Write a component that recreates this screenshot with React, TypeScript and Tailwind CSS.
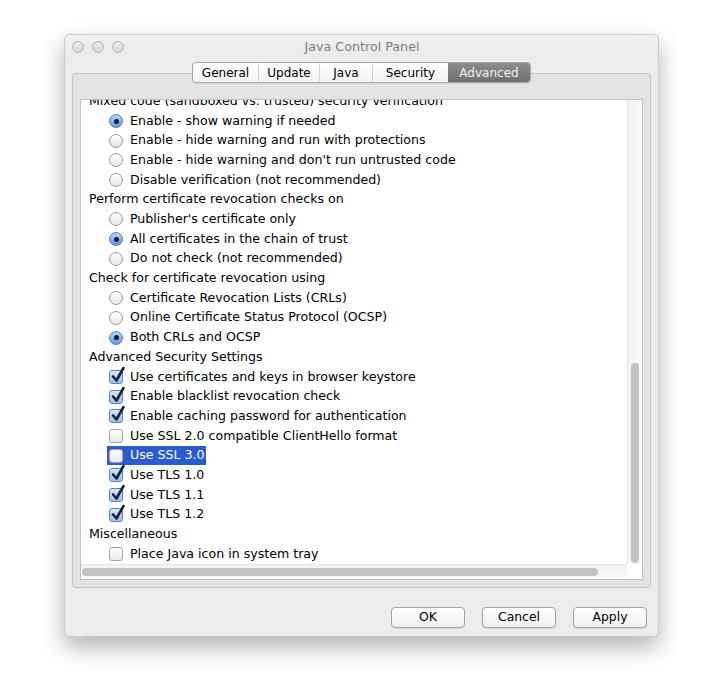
import React from 'react';

type Row =
    | { kind: 'header'; label: string }
    | { kind: 'radio'; label: string; on: boolean }
    | { kind: 'check'; label: string; on: boolean; selected?: boolean };

const ROWS: Row[] = [
    { kind: 'header', label: 'Mixed code (sandboxed vs. trusted) security verification' },
    { kind: 'radio', label: 'Enable - show warning if needed', on: true },
    { kind: 'radio', label: 'Enable - hide warning and run with protections', on: false },
    { kind: 'radio', label: "Enable - hide warning and don't run untrusted code", on: false },
    { kind: 'radio', label: 'Disable verification (not recommended)', on: false },
    { kind: 'header', label: 'Perform certificate revocation checks on' },
    { kind: 'radio', label: "Publisher's certificate only", on: false },
    { kind: 'radio', label: 'All certificates in the chain of trust', on: true },
    { kind: 'radio', label: 'Do not check (not recommended)', on: false },
    { kind: 'header', label: 'Check for certificate revocation using' },
    { kind: 'radio', label: 'Certificate Revocation Lists (CRLs)', on: false },
    { kind: 'radio', label: 'Online Certificate Status Protocol (OCSP)', on: false },
    { kind: 'radio', label: 'Both CRLs and OCSP', on: true },
    { kind: 'header', label: 'Advanced Security Settings' },
    { kind: 'check', label: 'Use certificates and keys in browser keystore', on: true },
    { kind: 'check', label: 'Enable blacklist revocation check', on: true },
    { kind: 'check', label: 'Enable caching password for authentication', on: true },
    { kind: 'check', label: 'Use SSL 2.0 compatible ClientHello format', on: false },
    { kind: 'check', label: 'Use SSL 3.0', on: false, selected: true },
    { kind: 'check', label: 'Use TLS 1.0', on: true },
    { kind: 'check', label: 'Use TLS 1.1', on: true },
    { kind: 'check', label: 'Use TLS 1.2', on: true },
    { kind: 'header', label: 'Miscellaneous' },
    { kind: 'check', label: 'Place Java icon in system tray', on: false },
];

const TABS = [
    { label: 'General', w: 'w-[65px]' },
    { label: 'Update', w: 'w-[61px]' },
    { label: 'Java', w: 'w-[53px]' },
    { label: 'Security', w: 'w-[76px]' },
    { label: 'Advanced', w: 'w-[82px]' },
];

function Radio({ on }: { on: boolean }) {
    if (on) {
        return (
            <span className="w-[14px] h-[14px] rounded-full border border-[#5a7fb5] bg-gradient-to-b from-[#b9d5f5] to-[#5c9ae3] flex items-center justify-center shrink-0">
                <span className="w-[5px] h-[5px] rounded-full bg-[#0f1c33]" />
            </span>
        );
    }
    return <span className="w-[14px] h-[14px] rounded-full border border-[#9d9d9d] bg-gradient-to-b from-[#ffffff] to-[#e6e6e6] shrink-0" />;
}

function Check({ on }: { on: boolean }) {
    if (on) {
        return (
            <span className="relative w-[14px] h-[14px] rounded-[3px] border border-[#6581ae] bg-gradient-to-b from-[#d6e6f8] to-[#9fc1ec] shrink-0">
                <svg className="absolute left-[1px] top-[-4px] overflow-visible" width="14" height="16" viewBox="0 0 14 16">
                    <path d="M2 9.5 L5.5 13.5 L12.5 1" fill="none" stroke="#14233f" strokeWidth="2.6" strokeLinecap="round" strokeLinejoin="round" />
                </svg>
            </span>
        );
    }
    return <span className="w-[14px] h-[14px] rounded-[3px] border border-[#a3a3a3] bg-gradient-to-b from-[#ffffff] to-[#e8e8e8] shrink-0" />;
}

function OptionRow({ row }: { row: Row }) {
    if (row.kind === 'header') {
        return <div className="h-[19.7px] flex items-center pl-[8px] whitespace-nowrap">{row.label}</div>;
    }
    const selected = row.kind === 'check' && row.selected;
    return (
        <div className="h-[19.7px] flex items-center pl-[26px] whitespace-nowrap">
            <div className={`inline-flex items-center h-[19px] pl-[2px] pr-[1px] gap-[7px] ${selected ? 'bg-[#2a5ccf] text-white' : ''}`}>
                {row.kind === 'radio' ? <Radio on={row.on} /> : <Check on={row.on} />}
                <span>{row.label}</span>
            </div>
        </div>
    );
}

function Button({ label }: { label: string }) {
    return (
        <button className="w-[74px] h-[21px] rounded-[4px] border border-[#a2a2a2] bg-gradient-to-b from-[#ffffff] to-[#f0f0f0] shadow-[0_1px_0_rgba(0,0,0,0.08)] text-[12.4px] text-black leading-none">
            {label}
        </button>
    );
}

export default function App() {
    return (
        <div className="w-[721px] h-[695px] bg-white pt-[34px] pl-[64px] text-[12.6px] text-black" style={{ fontFamily: '"Lucida Grande", "DejaVu Sans", sans-serif' }}>
            <div className="w-[595px] h-[603px] rounded-[5px] bg-[#ececec] border border-[#c9c9c9] shadow-[0_10px_22px_rgba(0,0,0,0.3)] flex flex-col">
                {/* title bar */}
                <div className="relative h-[23px] flex items-center rounded-t-[5px] bg-gradient-to-b from-[#f1f1f1] to-[#eaeaea]">
                    <div className="flex gap-[8px] pl-[7px]">
                        {[0, 1, 2].map((i) => (
                            <span key={i} className="w-[12px] h-[12px] rounded-full border border-[#b6b6b6] bg-gradient-to-b from-[#e9e9e9] to-[#d9d9d9]" />
                        ))}
                    </div>
                    <div className="absolute inset-0 flex items-center justify-center text-[12.7px] text-[#7d7d7d] pl-[1px]">Java Control Panel</div>
                </div>

                {/* tabs */}
                <div className="relative z-10 mt-[4px] flex justify-center">
                    <div className="flex h-[21px] rounded-[4px] border border-[#a6a6a6] bg-gradient-to-b from-[#ffffff] to-[#f3f3f3] shadow-[0_1px_0_rgba(0,0,0,0.06)] overflow-hidden text-[12px]">
                        {TABS.map((t, i) => {
                            const active = t.label === 'Advanced';
                            return (
                                <div
                                    key={t.label}
                                    className={`${t.w} flex items-center justify-center ${i > 0 && !active ? 'border-l border-[#d2d2d2]' : ''} ${active ? 'bg-gradient-to-b from-[#8d8d8d] to-[#6f6f6f] text-[#f2f2f2]' : ''}`}
                                >
                                    {t.label}
                                </div>
                            );
                        })}
                    </div>
                </div>

                {/* tab panel */}
                <div className="mx-[7px] -mt-[10px] h-[515px] rounded-[4px] border border-[#c3c3c3] bg-[#e3e3e3] pt-[25px] px-[7px] pb-[7px]">
                    <div className="h-full border border-[#c1c1c1] bg-white grid grid-cols-[1fr_15px] grid-rows-[1fr_15px]">
                        <div className="overflow-hidden">
                            <div className="-mt-[8.5px] flex flex-col">
                                {ROWS.map((r, i) => (
                                    <OptionRow key={i} row={r} />
                                ))}
                            </div>
                        </div>
                        <div className="border-l border-[#e6e6e6] bg-gradient-to-r from-[#f3f3f3] to-[#fafafa] flex flex-col pt-[263px] pb-[1px] items-center">
                            <div className="w-[8px] h-[200px] rounded-full bg-[#c2c2c2]" />
                        </div>
                        <div className="border-t border-[#e6e6e6] bg-gradient-to-b from-[#f3f3f3] to-[#fafafa] flex items-center pl-[1px]">
                            <div className="w-[516px] h-[8px] rounded-full bg-[#c2c2c2]" />
                        </div>
                        <div className="bg-white" />
                    </div>
                </div>

                {/* buttons */}
                <div className="mt-[19px] flex justify-end gap-[17px] pr-[11px]">
                    <Button label="OK" />
                    <Button label="Cancel" />
                    <Button label="Apply" />
                </div>
            </div>
        </div>
    );
}
